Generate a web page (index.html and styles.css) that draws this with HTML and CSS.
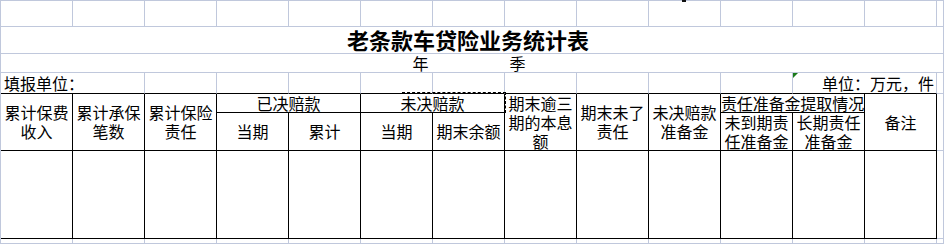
FILE: index.html
```html
<!DOCTYPE html>
<html lang="zh-CN">
<head>
<meta charset="utf-8">
<title>老条款车贷险业务统计表</title>
<link rel="stylesheet" href="styles.css">
</head>
<body>
<div class="sheet">
  <!-- row 1 -->
  <div class="c"></div><div class="c"></div><div class="c"></div><div class="c"></div><div class="c"></div>
  <div class="c"></div><div class="c"></div><div class="c"></div><div class="c"></div>
  <div class="c"><span class="dot"></span></div>
  <div class="c"></div><div class="c"></div><div class="c"></div><div class="c"></div>

  <!-- row 2: title -->
  <div class="c full title">老条款车贷险业务统计表</div>
  <!-- row 3: period -->
  <div class="c full period"><span>年</span><span>季</span></div>

  <!-- row 4 -->
  <div class="c top span2 left">填报单位：</div>
  <div class="c top"></div><div class="c top"></div><div class="c top"></div><div class="c top"></div>
  <div class="c top"></div><div class="c top"></div><div class="c top"></div><div class="c top"></div>
  <div class="c top"></div>
  <div class="c top span2 right"><span class="flag"></span>单位：万元，件</div>
  <div class="c"></div>

  <!-- header -->
  <div class="t h rows2 col1">累计保费收入</div>
  <div class="t h rows2 col2">累计承保笔数</div>
  <div class="t h rows2 col3">累计保险责任</div>
  <div class="t h grp col4">已决赔款</div>
  <div class="t h grp col6">未决赔款</div>
  <div class="t h rows2 col8">期末逾三期的本息额</div>
  <div class="t h rows2 col9">期末未了责任</div>
  <div class="t h rows2 col10">未决赔款准备金</div>
  <div class="t h grp col11 nowrap">责任准备金提取情况</div>
  <div class="t h rows2 col13">备注</div>
  <div class="c rows2 col14"></div>

  <div class="t h sub col4">当期</div>
  <div class="t h sub col5">累计</div>
  <div class="t h sub col6">当期</div>
  <div class="t h sub col7">期末余额</div>
  <div class="t h sub col11">未到期责任准备金</div>
  <div class="t h sub col12">长期责任准备金</div>

  <!-- data row -->
  <div class="t"></div><div class="t"></div><div class="t"></div><div class="t"></div><div class="t"></div>
  <div class="t"></div><div class="t"></div><div class="t"></div><div class="t"></div><div class="t"></div>
  <div class="t"></div><div class="t"></div><div class="t"></div>
  <div class="c"></div>

  <!-- last row -->
  <div class="c"></div><div class="c"></div><div class="c"></div><div class="c"></div><div class="c"></div>
  <div class="c"></div><div class="c"></div><div class="c"></div><div class="c"></div><div class="c"></div>
  <div class="c"></div><div class="c"></div><div class="c"></div><div class="c"></div>

  <div class="marquee"></div>
</div>
</body>
</html>
```
FILE: styles.css
```css
html, body {
  margin: 0;
  padding: 0;
  background: #ffffff;
}

body {
  width: 944px;
  height: 244px;
  overflow: hidden;
  font-family: "Noto Sans CJK SC", "Noto Sans", sans-serif;
  font-size: 16px;
  color: #000000;
}

.sheet {
  position: relative;
  display: grid;
  grid-template-columns: repeat(13, 72px) 1fr;
  grid-template-rows: 26px 27px 19px 21px 19px 38px 88px 1fr;
  width: 944px;
  height: 244px;
  box-sizing: border-box;
  border-left: 1px solid #c0c8dc;
  border-top: 1px solid #c0c8dc;
}

.c, .t {
  box-sizing: border-box;
  min-width: 0;
  position: relative;
  line-height: 19px;
}

.c {
  border-right: 1px solid #c0c8dc;
  border-bottom: 1px solid #c0c8dc;
}

.t {
  border-right: 1px solid #000000;
  border-bottom: 1px solid #000000;
}

.full {
  grid-column: 1 / -1;
}

.title {
  display: flex;
  justify-content: center;
  align-items: flex-end;
  padding-right: 8px;
  padding-bottom: 3px;
  font-size: 22px;
  font-weight: 700;
  line-height: 22px;
}

.period {
  display: flex;
  justify-content: center;
  align-items: center;
  gap: 81px;
  padding-right: 6px;
  line-height: 16px;
}

.top {
  border-bottom-color: #000000;
}

.span2 {
  grid-column: span 2;
}

.left {
  display: flex;
  align-items: flex-end;
  padding-left: 3px;
  white-space: nowrap;
}

.right {
  display: flex;
  align-items: flex-end;
  justify-content: flex-end;
  padding-right: 2px;
  white-space: nowrap;
}

.flag {
  position: absolute;
  left: 0;
  top: 0;
  width: 0;
  height: 0;
  border-top: 5px solid #1a7a1a;
  border-right: 5px solid transparent;
}

.dot {
  position: absolute;
  left: 33px;
  top: -1px;
  width: 4px;
  height: 2px;
  background: #111111;
}

.h {
  display: flex;
  align-items: center;
  justify-content: center;
  text-align: center;
  overflow: visible;
}

.rows2 { grid-row: 5 / 7; }
.grp { grid-row: 5; line-height: 17px; }
.sub { grid-row: 6; }

.col1 { grid-column: 1; }
.col2 { grid-column: 2; }
.col3 { grid-column: 3; }
.col4 { grid-column-start: 4; }
.col5 { grid-column: 5; }
.col6 { grid-column-start: 6; }
.col7 { grid-column: 7; }
.col8 { grid-column: 8; }
.col9 { grid-column: 9; }
.col10 { grid-column: 10; }
.col11 { grid-column-start: 11; }
.col12 { grid-column: 12; }
.col13 { grid-column: 13; }
.col14 { grid-column: 14; }

.grp.col4, .grp.col6, .grp.col11 {
  grid-column-end: span 2;
}

.nowrap {
  white-space: nowrap;
  letter-spacing: -0.1px;
}

.marquee {
  position: absolute;
  left: 401px;
  top: 91px;
  width: 104px;
  height: 21px;
  box-sizing: border-box;
  border-top: 1px dashed #000000;
  border-right: 1px dashed #000000;
  pointer-events: none;
}
```
